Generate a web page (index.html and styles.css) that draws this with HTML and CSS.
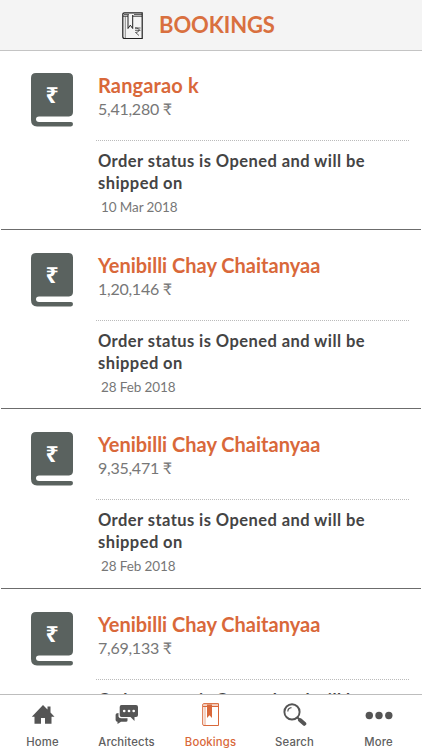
FILE: index.html
```html
<!DOCTYPE html>
<html lang="en">
<head>
<meta charset="utf-8">
<title>Bookings</title>
<link rel="stylesheet" href="styles.css">
</head>
<body>
<div class="app">
  <header class="header">
    <svg class="header-icon" width="22" height="28" viewBox="0 0 22 28">
      <g fill="none" stroke="#202020" stroke-width="1.200">
        <path d="M2.500 .8H20.200V26.500H2.500Q.8 26.500.8 24.800V2.500Q.8.8 2.500.8Z"/>
        <path d="M1 4.200H20" stroke-width=".9"/>
        <path d="M3.300 4.500V26" stroke-width=".5"/>
        <path d="M2 2.500H7M12 2.500H20" stroke-width=".7"/>
        <path d="M6 3V16.500L8.300 13.200L10.700 16.500V3" fill="#f4f4f4" stroke-width="1"/>
        <path d="M13 16H18.500M13 18.300H18.500M13 16Q17.500 16 17 18.300T13.500 20.500L17 23.500" stroke-width=".7"/>
      </g>
    </svg>
    <h1 class="title">BOOKINGS</h1>
  </header>
  <main class="list">
    <article class="row">
      <svg class="book" width="42" height="54" viewBox="0 0 42 54"><path d="M5 0H37.500Q42 0 42 4.500V39Q42 43 38 43.500H8Q5 43.700 5 46.200T8 49H40Q42 49 42 51T40 53.500H6Q0 53 0 47V5Q0 0 5 0Z"/><text x="21" y="30" text-anchor="middle" class="book-rupee">₹</text></svg>
      <div class="info">
        <h2 class="name short">Rangarao k</h2>
        <p class="amount">5,41,280 ₹</p>
        <p class="status">Order status is Opened and will be<br>shipped on</p>
        <p class="date">10 Mar 2018</p>
      </div>
    </article>
    <article class="row">
      <svg class="book" width="42" height="54" viewBox="0 0 42 54"><path d="M5 0H37.500Q42 0 42 4.500V39Q42 43 38 43.500H8Q5 43.700 5 46.200T8 49H40Q42 49 42 51T40 53.500H6Q0 53 0 47V5Q0 0 5 0Z"/><text x="21" y="30" text-anchor="middle" class="book-rupee">₹</text></svg>
      <div class="info">
        <h2 class="name">Yenibilli Chay Chaitanyaa</h2>
        <p class="amount">1,20,146 ₹</p>
        <p class="status">Order status is Opened and will be<br>shipped on</p>
        <p class="date">28 Feb 2018</p>
      </div>
    </article>
    <article class="row">
      <svg class="book" width="42" height="54" viewBox="0 0 42 54"><path d="M5 0H37.500Q42 0 42 4.500V39Q42 43 38 43.500H8Q5 43.700 5 46.200T8 49H40Q42 49 42 51T40 53.500H6Q0 53 0 47V5Q0 0 5 0Z"/><text x="21" y="30" text-anchor="middle" class="book-rupee">₹</text></svg>
      <div class="info">
        <h2 class="name">Yenibilli Chay Chaitanyaa</h2>
        <p class="amount">9,35,471 ₹</p>
        <p class="status">Order status is Opened and will be<br>shipped on</p>
        <p class="date">28 Feb 2018</p>
      </div>
    </article>
    <article class="row">
      <svg class="book" width="42" height="54" viewBox="0 0 42 54"><path d="M5 0H37.500Q42 0 42 4.500V39Q42 43 38 43.500H8Q5 43.700 5 46.200T8 49H40Q42 49 42 51T40 53.500H6Q0 53 0 47V5Q0 0 5 0Z"/><text x="21" y="30" text-anchor="middle" class="book-rupee">₹</text></svg>
      <div class="info">
        <h2 class="name">Yenibilli Chay Chaitanyaa</h2>
        <p class="amount">7,69,133 ₹</p>
        <p class="status">Order status is Opened and will be</p>
      </div>
    </article>
  </main>
  <nav class="tabs">
    <a class="tab">
      <svg width="24" height="24" viewBox="0 0 24 24"><path fill="#555" d="M12 2L16.500 6.500V3.500H19.500V9.500L23.500 13.800H20.500V20.800H14V15H10V20.800H3.500V13.800H.8Z"/></svg>
      <span>Home</span>
    </a>
    <a class="tab">
      <svg width="24" height="24" viewBox="0 0 24 24"><path fill="#555" d="M6.500 2H21Q23 2 23 4V12Q23 14 21 14H19.500V18L15.500 14H6.500Q4.700 14 4.700 12V4Q4.700 2 6.500 2Z"/><path fill="#555" d="M3.500 10V13.500Q3.800 15.300 6 15.300H12.500V17.500Q12.500 18.800 11 18.800H6L2.500 21V18.800Q.6 18.500.6 17V12Q.6 10 3.500 10Z"/><g fill="#fff"><circle cx="9.200" cy="8" r="1.350"/><circle cx="14" cy="8" r="1.350"/><circle cx="18.700" cy="8" r="1.350"/></g></svg>
      <span>Architects</span>
    </a>
    <a class="tab active">
      <svg width="24" height="24" viewBox="0 0 24 24"><g fill="none" stroke="#d9683a"><path d="M4.700.6H19.500V22.500H5Q3.700 22.500 3.700 21V2Q3.700.6 4.700.6ZM4 3.500H19"/><path d="M6 4V22M4.500 2H19" stroke-width=".6"/></g><path fill="#d9683a" d="M8 1.500H13V15L10.500 12.300L8 15Z"/></svg>
      <span>Bookings</span>
    </a>
    <a class="tab">
      <svg width="24" height="24" viewBox="0 0 24 24"><g fill="none" stroke="#555"><circle cx="9" cy="8.900" r="7.600" stroke-width="1.900"/><path d="M4.800 8.500Q5 5 8.500 4.700" stroke-width="1.200"/><path d="M14.500 14.500L17 17" stroke-width="2"/><path d="M17 17L21.300 20.800" stroke-width="4" stroke-linecap="round"/></g></svg>
      <span>Search</span>
    </a>
    <a class="tab">
      <svg width="28" height="24" viewBox="0 0 28 24"><g fill="#555"><circle cx="4.300" cy="12.500" r="3.700"/><circle cx="14" cy="12.500" r="3.700"/><circle cx="23.800" cy="12.500" r="3.700"/></g></svg>
      <span>More</span>
    </a>
  </nav>
</div>
</body>
</html>
```
FILE: styles.css
```css
* { box-sizing: border-box; }
body, h1, h2, p { margin: 0; }
body { background: #fff; font-family: Lato, "Noto Sans", sans-serif; }
.app { width: 422px; height: 750px; display: flex; flex-direction: column; overflow: hidden; }
.header { height: 51px; flex: none; display: flex; background: #f4f4f4; border-bottom: 1px solid #c4c4c4; padding-left: 122px; }
.header-icon { margin-top: 12px; }
.title { margin: 12px 0 0 15px; font-size: 22px; line-height: 26px; font-weight: 700; color: #d9703f; letter-spacing: -.1px; white-space: nowrap; }
.list { flex: 1; min-height: 0; overflow: hidden; padding: 0 1px; }
.row { height: 179px; display: flex; border-bottom: 1px solid #6c6c6c; }
.row:nth-child(even) { height: 180px; padding-top: 1px; }
.row:nth-child(2) { height: 179px; }
.row:nth-child(3) { height: 180px; padding-top: 1px; }
.book { margin: 22px 0 0 30px; flex: none; fill: #5a625f; }
.book-rupee { font: 700 23px "Noto Sans", "DejaVu Sans", sans-serif; fill: #fff; }
.info { margin-left: 23px; width: 313px; padding-left: 2px; }
.name { margin-top: 22px; font-size: 20px; line-height: 24px; font-weight: 700; color: #d9683a; letter-spacing: 0; white-space: nowrap; }
.short { letter-spacing: .15px; }
.amount { margin-top: 1px; font-size: 16px; line-height: 22px; color: #777; letter-spacing: -.25px; white-space: nowrap; }
.status { margin: 20px 0 0 -2px; padding: 9px 0 0 2px; border-top: 1px dotted #bbb; font-size: 16.500px; line-height: 22px; font-weight: 700; color: #444; letter-spacing: .43px; white-space: nowrap; }
.date { margin: 4px 0 0 3px; font-size: 13.500px; line-height: 18px; color: #777; letter-spacing: -.1px; white-space: nowrap; }
.tabs { height: 56px; flex: none; display: flex; border-top: 1px solid #bdbdbd; background: #fff; padding-left: .5px; }
.tab { width: 84px; display: flex; flex-direction: column; align-items: center; padding-top: 8px; color: #606060; font: 500 11.300px/14px Inter, sans-serif; letter-spacing: .15px; }
.tab span { margin-top: 8px; }
.active { color: #d9683a; }
```
